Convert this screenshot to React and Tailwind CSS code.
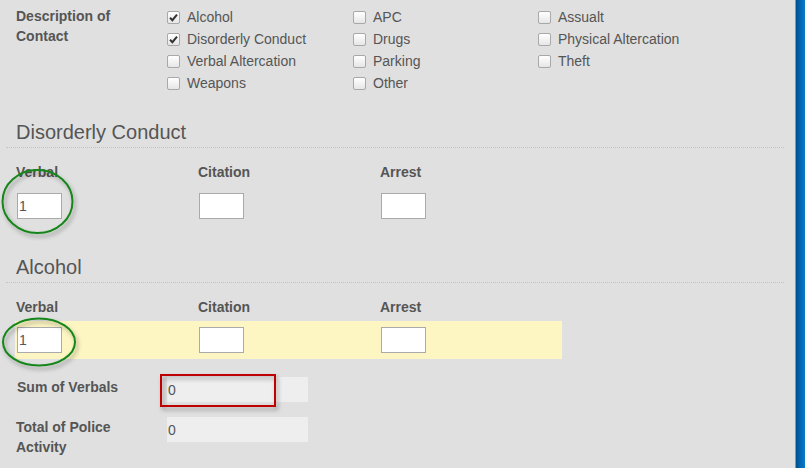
import React from "react"

const columns = [
  [
    { label: "Alcohol", checked: true },
    { label: "Disorderly Conduct", checked: true },
    { label: "Verbal Altercation" },
    { label: "Weapons" },
  ],
  [{ label: "APC" }, { label: "Drugs" }, { label: "Parking" }, { label: "Other" }],
  [{ label: "Assualt" }, { label: "Physical Altercation" }, { label: "Theft" }],
]

const Checkbox = ({ label, checked }) => (
  <div className="h-[22px] flex items-center gap-[7px]">
    <span className="w-[13px] h-[13px] border border-[#a8a8a8] rounded-[2px] bg-linear-to-b from-white to-[#e6e6e6] flex items-center justify-center">
      {checked && (
        <svg width="9" height="9" viewBox="0 0 9 9">
          <path d="M1 4.8 L3.4 7.2 L8 1.6" fill="none" stroke="#333" strokeWidth="2" />
        </svg>
      )}
    </span>
    <span>{label}</span>
  </div>
)

const Section = ({ title, className }) => (
  <div className={"ml-[6px] mr-[11px] pl-[10px] pb-[5px] border-b border-dotted border-[#c4c4c4] " + className}>
    <h2 className="text-[20px] leading-[22px] text-[#555] translate-y-px">{title}</h2>
  </div>
)

const FieldLabels = () => (
  <div className="grid grid-cols-[182px_182px_182px] pl-[16px] mt-[14px] text-[14px] font-bold leading-[20px] text-[#555]">
    <span>Verbal</span>
    <span>Citation</span>
    <span>Arrest</span>
  </div>
)

const Box = ({ value }) => (
  <div className="w-[45px] h-[26px] border border-[#aaa] bg-white text-[14px] text-[#555] leading-[24px] pl-[1px]">
    {value}
  </div>
)

const App = () => {
  return (
    <div className="w-[805px] h-[468px] flex overflow-hidden" style={{ fontFamily: '"Liberation Sans", Arial, sans-serif' }}>
      <div className="relative flex-1 bg-[#e0e0e0] text-[#555]">
        {/* Description of contact */}
        <div className="grid grid-cols-[151px_186px_185px_1fr] pl-[16px] pt-[6px] text-[14px]">
          <div className="text-[14px] font-bold leading-[20px]">
            Description of
            <br />
            Contact
          </div>
          {columns.map((col, i) => (
            <div key={i} className="flex flex-col">
              {col.map(item => (
                <Checkbox key={item.label} {...item} />
              ))}
            </div>
          ))}
        </div>

        {/* Disorderly Conduct */}
        <Section title="Disorderly Conduct" className="mt-[26px]" />
        <FieldLabels />
        <div className="grid grid-cols-[182px_182px_182px] pl-[17px] mt-[11px]">
          <Box value="1" />
          <Box />
          <Box />
        </div>

        {/* Alcohol */}
        <Section title="Alcohol" className="mt-[36px]" />
        <FieldLabels />
        <div className="ml-[15px] w-[547px] mt-[4px] bg-[#fdf6c3] py-[6px] pl-[2px] grid grid-cols-[182px_182px_182px]">
          <Box value="1" />
          <Box />
          <Box />
        </div>

        {/* Totals */}
        <div className="mt-[18px] pl-[17px] grid grid-cols-[150px_141px] gap-y-[15px] text-[14px] font-bold leading-[20px]">
          <span>Sum of Verbals</span>
          <div className="h-[25px] bg-[#eeeeee] text-[14px] font-normal leading-[26px] pl-[1px]">0</div>
          <span className="-ml-px pr-[20px]">Total of Police Activity</span>
          <div className="h-[25px] bg-[#eeeeee] text-[14px] font-normal leading-[26px] pl-[1px]">0</div>
        </div>

        {/* annotations drawn over the form */}
        <svg className="absolute inset-0 pointer-events-none" width="795" height="468">
          <defs>
            <filter id="shade" x="-20%" y="-20%" width="140%" height="160%">
              <feDropShadow dx="2" dy="3" stdDeviation="2" floodColor="#000" floodOpacity="0.35" />
            </filter>
          </defs>
          <ellipse cx="37.5" cy="201.5" rx="35" ry="31.5" fill="none" stroke="#17861a" strokeWidth="2" filter="url(#shade)" />
          <ellipse cx="39" cy="342" rx="36" ry="23.5" fill="none" stroke="#17861a" strokeWidth="2" filter="url(#shade)" />
          <rect x="161" y="375" width="114" height="31" fill="none" stroke="#c00000" strokeWidth="2" filter="url(#shade)" />
        </svg>
      </div>
      <div className="w-[10px] border-l border-[#8d959c] bg-linear-to-r from-[#004f8c] via-[#0068b4] to-[#0a7ccc]" />
    </div>
  )
}

export default App
